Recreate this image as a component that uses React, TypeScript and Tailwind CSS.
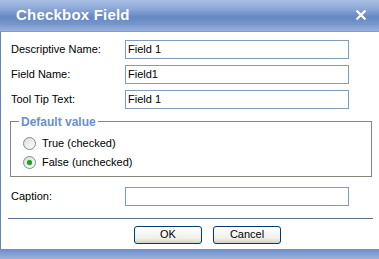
import React from "react";

const font = { fontFamily: '"Liberation Sans", Arial, sans-serif' };

const Field = ({ label, value }: { label: string; value: string }) => (
  <div className="flex items-center h-[19px]">
    <span className="w-[114px] text-[11px] text-black">{label}</span>
    <div className="w-[224px] h-[19px] border border-[#7f9db9] bg-white flex items-center px-[2px] text-[11px] text-black">
      {value}
    </div>
  </div>
);

const Radio = ({ checked, label }: { checked?: boolean; label: string }) => (
  <div className="flex items-center h-[19px] ml-[4px] gap-[6px]">
    <div className="w-[13px] h-[13px] rounded-full border border-[#7d8a9c] bg-[linear-gradient(135deg,#dcdcd6,#ffffff)] flex items-center justify-center">
      {checked && <div className="w-[5px] h-[5px] rounded-full bg-[#21a121] shadow-[0_0_1px_#5fd35f]" />}
    </div>
    <span className="text-[11px] text-black">{label}</span>
  </div>
);

const Button = ({ children }: { children: React.ReactNode }) => (
  <button className="w-[68px] h-[18px] rounded-[3px] border border-[#003c74] bg-[linear-gradient(to_bottom,#ffffff,#f0f0ea_70%,#d6d0c5)] text-[11px] text-black leading-none">
    {children}
  </button>
);

export default function App() {
  return (
    <div className="w-[379px] h-[259px] bg-white flex flex-col overflow-hidden" style={font}>
      {/* title bar */}
      <div className="h-[32px] flex items-center justify-between pl-[16px] pr-[12px] bg-[linear-gradient(to_bottom,#a9bfe3_0%,#8aa6d6_30%,#6787c2_55%,#7393cb_75%,#9ab2dd_100%)]">
        <span className="text-[15px] font-bold text-white tracking-[0.2px]">Checkbox Field</span>
        <svg width="12" height="12" viewBox="0 0 12 12">
          <path d="M1.5 1.5 L10.5 10.5 M10.5 1.5 L1.5 10.5" stroke="#fff" strokeWidth="2.2" />
        </svg>
      </div>

      {/* body */}
      <div className="flex-1 border-t border-[#7f9bd0] border-l border-l-[#6383c3] bg-white flex flex-col pt-[8px] pb-[5px]">
        <div className="flex flex-col gap-[6px] pl-[10px]">
          <Field label="Descriptive Name:" value="Field 1" />
          <Field label="Field Name:" value="Field1" />
          <Field label="Tool Tip Text:" value="Field 1" />
        </div>

        <fieldset className="mt-[6px] ml-[9px] w-[362px] border border-[#85857a] px-[8px] pt-[5px] pb-[4px]">
          <legend className="px-[2px] text-[12px] leading-[14px] font-bold text-[#6b8fcc]">Default value</legend>
          <Radio label="True (checked)" />
          <Radio checked label="False (unchecked)" />
        </fieldset>

        <div className="mt-[10px] pl-[10px]">
          <Field label="Caption:" value="" />
        </div>

        <div className="mt-[12px] ml-[7px] mr-[6px] h-px bg-[#5b6d8d]" />

        <div className="mt-[7px] flex gap-[11px] pl-[133px]">
          <Button>OK</Button>
          <Button>Cancel</Button>
        </div>
      </div>

      {/* bottom bar */}
      <div className="h-[11px] bg-[linear-gradient(to_bottom,#6c8bca,#9cb2dc)]" />
    </div>
  );
}
